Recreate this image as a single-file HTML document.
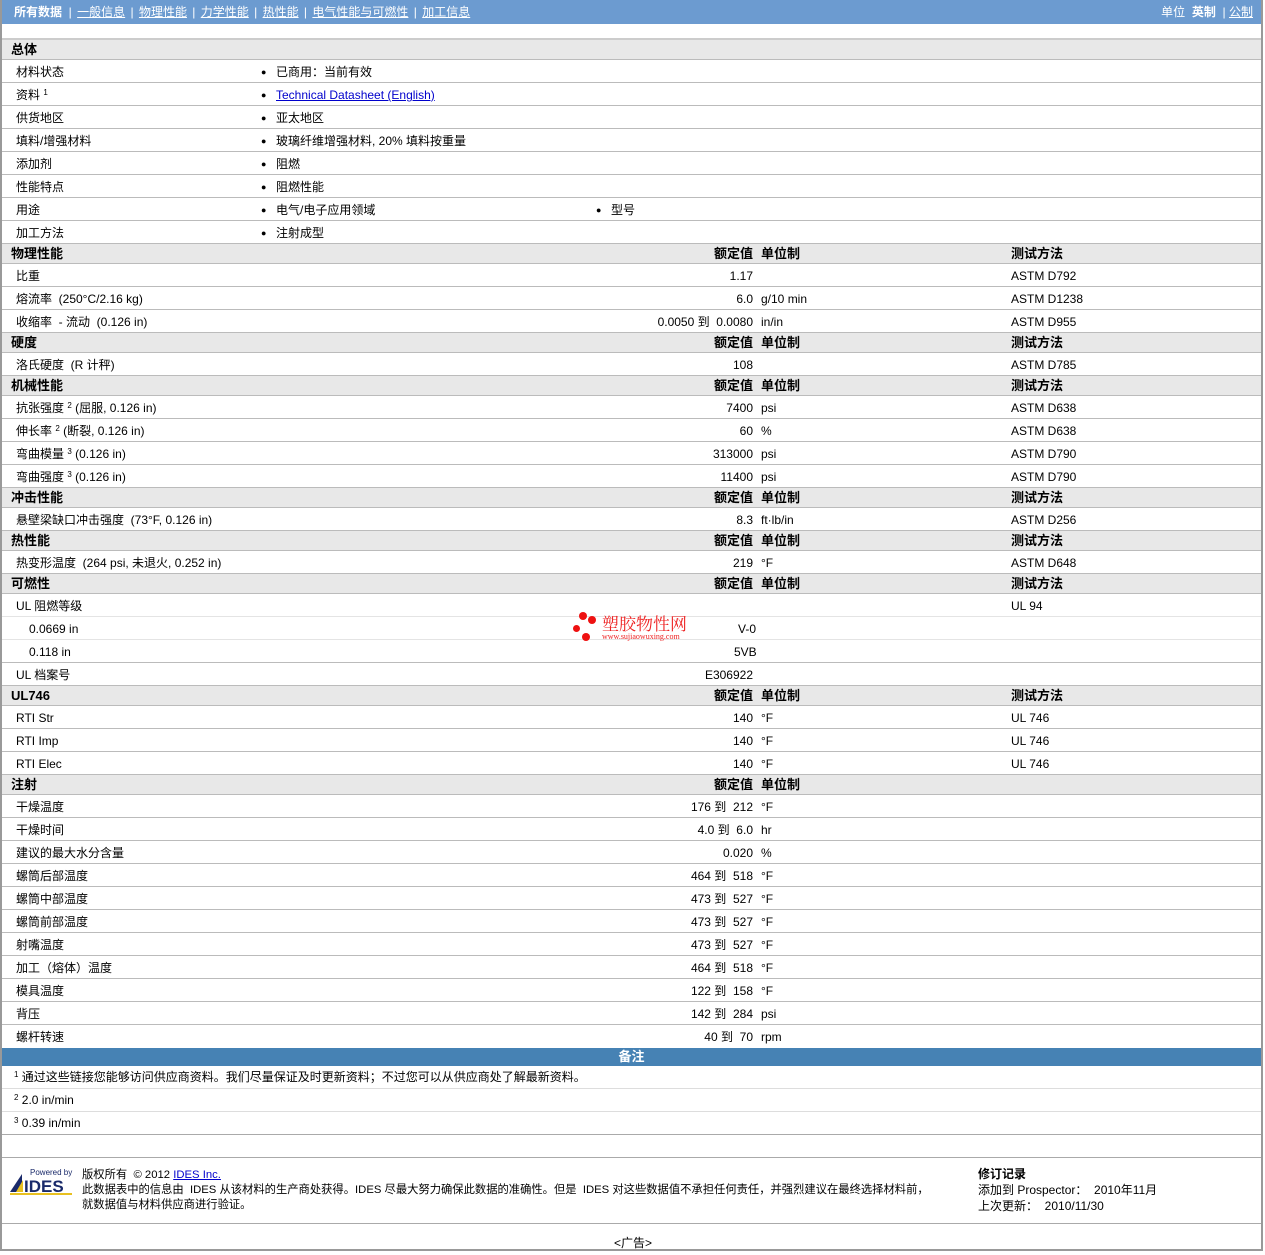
<!DOCTYPE html>
<html><head><meta charset="utf-8"><style>
*{margin:0;padding:0;box-sizing:border-box}
body{width:1265px;height:1255px;background:#fff;font-family:"Liberation Sans","Noto Sans CJK SC",sans-serif;font-size:12px;color:#000;position:relative;overflow:hidden}
#wrap{position:absolute;left:0;top:0;width:1263px;height:1251px;border-left:2px solid #999;border-right:2px solid #999;border-bottom:2px solid #999}
.top{height:24px;background:#6c9bd0;color:#fff;position:relative;font-size:12px;line-height:24px}
.top .l{position:absolute;left:12px;top:0;white-space:nowrap}
.top .l u{margin:0 2px}
.top .r{position:absolute;right:8px;top:0}
.gap{height:16px;border-bottom:2px solid #ccc}
.h{height:20px;background:#e8e8e8;border-bottom:1px solid #bbb;position:relative;font-weight:bold;font-size:13px;line-height:20px}
.r23{height:23px;border-bottom:1px solid #bbb;position:relative;line-height:24px}
.h span,.r23 span{position:absolute;top:0;white-space:nowrap}
.c1{left:14px}.hl{left:9px}
.b1{left:259px;font-size:9px}.t1{left:274px}.b2{left:594px;font-size:9px}.t2{left:609px}
.v{right:508px;text-align:right}
.u{left:759px}
.m{left:1009px}
sup{font-size:8px;line-height:0;vertical-align:4px}
a{color:#00c}
.note{height:18px;background:#4682b4;color:#fff;font-weight:bold;text-align:center;font-size:13px;line-height:17px}
.nr{height:23px;border-bottom:1px solid #ddd;padding-left:12px;line-height:23px}
</style></head><body><div id="wrap">
<div class="top"><div class="l"><b>所有数据</b> &nbsp;| <u>一般信息</u> | <u>物理性能</u> | <u>力学性能</u> | <u>热性能</u> | <u>电气性能与可燃性</u> | <u>加工信息</u></div><div class="r">单位 &nbsp;<b>英制</b> &nbsp;| <u>公制</u></div></div>
<div class="gap"></div>
<div class="h"><span class="hl">总体</span></div>
<div class="r23"><span class="c1">材料状态</span><span class="b1">●</span><span class="t1">已商用：当前有效</span></div>
<div class="r23"><span class="c1">资料 <sup>1</sup></span><span class="b1">●</span><span class="t1"><a><u>Technical Datasheet (English)</u></a></span></div>
<div class="r23"><span class="c1">供货地区</span><span class="b1">●</span><span class="t1">亚太地区</span></div>
<div class="r23"><span class="c1">填料/增强材料</span><span class="b1">●</span><span class="t1">玻璃纤维增强材料, 20% 填料按重量</span></div>
<div class="r23"><span class="c1">添加剂</span><span class="b1">●</span><span class="t1">阻燃</span></div>
<div class="r23"><span class="c1">性能特点</span><span class="b1">●</span><span class="t1">阻燃性能</span></div>
<div class="r23"><span class="c1">用途</span><span class="b1">●</span><span class="t1">电气/电子应用领域</span><span class="b2">●</span><span class="t2">型号</span></div>
<div class="r23"><span class="c1">加工方法</span><span class="b1">●</span><span class="t1">注射成型</span></div>

<div class="h"><span class="hl">物理性能</span><span class="v">额定值</span><span class="u">单位制</span><span class="m">测试方法</span></div>
<div class="r23"><span class="c1">比重</span><span class="v">1.17</span><span class="m">ASTM D792</span></div>
<div class="r23"><span class="c1">熔流率 &nbsp;(250°C/2.16 kg)</span><span class="v">6.0</span><span class="u">g/10 min</span><span class="m">ASTM D1238</span></div>
<div class="r23"><span class="c1">收缩率 &nbsp;- 流动 &nbsp;(0.126 in)</span><span class="v">0.0050 到 &nbsp;0.0080</span><span class="u">in/in</span><span class="m">ASTM D955</span></div>

<div class="h"><span class="hl">硬度</span><span class="v">额定值</span><span class="u">单位制</span><span class="m">测试方法</span></div>
<div class="r23"><span class="c1">洛氏硬度 &nbsp;(R 计秤)</span><span class="v">108</span><span class="m">ASTM D785</span></div>

<div class="h"><span class="hl">机械性能</span><span class="v">额定值</span><span class="u">单位制</span><span class="m">测试方法</span></div>
<div class="r23"><span class="c1">抗张强度 <sup>2</sup> (屈服, 0.126 in)</span><span class="v">7400</span><span class="u">psi</span><span class="m">ASTM D638</span></div>
<div class="r23"><span class="c1">伸长率 <sup>2</sup> (断裂, 0.126 in)</span><span class="v">60</span><span class="u">%</span><span class="m">ASTM D638</span></div>
<div class="r23"><span class="c1">弯曲模量 <sup>3</sup> (0.126 in)</span><span class="v">313000</span><span class="u">psi</span><span class="m">ASTM D790</span></div>
<div class="r23"><span class="c1">弯曲强度 <sup>3</sup> (0.126 in)</span><span class="v">11400</span><span class="u">psi</span><span class="m">ASTM D790</span></div>

<div class="h"><span class="hl">冲击性能</span><span class="v">额定值</span><span class="u">单位制</span><span class="m">测试方法</span></div>
<div class="r23"><span class="c1">悬壁梁缺口冲击强度 &nbsp;(73°F, 0.126 in)</span><span class="v">8.3</span><span class="u">ft·lb/in</span><span class="m">ASTM D256</span></div>

<div class="h"><span class="hl">热性能</span><span class="v">额定值</span><span class="u">单位制</span><span class="m">测试方法</span></div>
<div class="r23"><span class="c1">热变形温度 &nbsp;(264 psi, 未退火, 0.252 in)</span><span class="v">219</span><span class="u">°F</span><span class="m">ASTM D648</span></div>

<div class="h"><span class="hl">可燃性</span><span class="v">额定值</span><span class="u">单位制</span><span class="m">测试方法</span></div>
<div class="r23" style="border-bottom-color:#e4e4e4"><span class="c1">UL 阻燃等级</span><span class="m">UL 94</span></div>
<div class="r23" style="border-bottom-color:#e4e4e4"><span style="left:27px">0.0669 in</span><span style="left:736px">V-0</span></div>
<div class="r23"><span style="left:27px">0.118 in</span><span style="left:732px">5VB</span></div>
<div class="r23"><span class="c1">UL 档案号</span><span class="v">E306922</span></div>

<div class="h"><span class="hl">UL746</span><span class="v">额定值</span><span class="u">单位制</span><span class="m">测试方法</span></div>
<div class="r23"><span class="c1">RTI Str</span><span class="v">140</span><span class="u">°F</span><span class="m">UL 746</span></div>
<div class="r23"><span class="c1">RTI Imp</span><span class="v">140</span><span class="u">°F</span><span class="m">UL 746</span></div>
<div class="r23"><span class="c1">RTI Elec</span><span class="v">140</span><span class="u">°F</span><span class="m">UL 746</span></div>

<div class="h"><span class="hl">注射</span><span class="v">额定值</span><span class="u">单位制</span></div>
<div class="r23"><span class="c1">干燥温度</span><span class="v">176 到 &nbsp;212</span><span class="u">°F</span></div>
<div class="r23"><span class="c1">干燥时间</span><span class="v">4.0 到 &nbsp;6.0</span><span class="u">hr</span></div>
<div class="r23"><span class="c1">建议的最大水分含量</span><span class="v">0.020</span><span class="u">%</span></div>
<div class="r23"><span class="c1">螺筒后部温度</span><span class="v">464 到 &nbsp;518</span><span class="u">°F</span></div>
<div class="r23"><span class="c1">螺筒中部温度</span><span class="v">473 到 &nbsp;527</span><span class="u">°F</span></div>
<div class="r23"><span class="c1">螺筒前部温度</span><span class="v">473 到 &nbsp;527</span><span class="u">°F</span></div>
<div class="r23"><span class="c1">射嘴温度</span><span class="v">473 到 &nbsp;527</span><span class="u">°F</span></div>
<div class="r23"><span class="c1">加工（熔体）温度</span><span class="v">464 到 &nbsp;518</span><span class="u">°F</span></div>
<div class="r23"><span class="c1">模具温度</span><span class="v">122 到 &nbsp;158</span><span class="u">°F</span></div>
<div class="r23"><span class="c1">背压</span><span class="v">142 到 &nbsp;284</span><span class="u">psi</span></div>
<div class="r23" style="border-bottom:none"><span class="c1">螺杆转速</span><span class="v">40 到 &nbsp;70</span><span class="u">rpm</span></div>

<div class="note">备注</div>
<div class="nr"><sup>1</sup> 通过这些链接您能够访问供应商资料。我们尽量保证及时更新资料；不过您可以从供应商处了解最新资料。</div>
<div class="nr"><sup>2</sup> 2.0 in/min</div>
<div class="nr" style="border-bottom:1px solid #aaa"><sup>3</sup> 0.39 in/min</div>
<div style="height:23px;border-bottom:1px solid #aaa"></div>
<div style="height:66px;border-bottom:1px solid #aaa;position:relative">
 <svg style="position:absolute;left:6px;top:10px" width="66" height="28" viewBox="0 0 66 28"><text x="22" y="7" font-size="8" fill="#1a2a6a" font-family="Liberation Sans">Powered by</text><polygon points="2,24 14,6 14,24" fill="#1a2a6a"/><polygon points="8,24 15,12 15,24" fill="#e8c020"/><text x="16" y="24" font-size="17" font-weight="bold" fill="#1a2a6a" font-family="Liberation Sans">IDES</text><rect x="2" y="25" width="62" height="2" fill="#e8c020"/></svg>
 <div style="position:absolute;left:80px;top:10px;line-height:15px;font-size:11.3px;width:880px">版权所有 &nbsp;© 2012 <a><u>IDES Inc.</u></a><br>此数据表中的信息由 &nbsp;IDES 从该材料的生产商处获得。IDES 尽最大努力确保此数据的准确性。但是 &nbsp;IDES 对这些数据值不承担任何责任，并强烈建议在最终选择材料前，<br>就数据值与材料供应商进行验证。</div>
 <div style="position:absolute;left:976px;top:8px;line-height:16px"><b>修订记录</b><br>添加到 Prospector： &nbsp;2010年11月<br>上次更新： &nbsp;2010/11/30</div>
</div>
<div style="position:absolute;left:612px;top:1234px">&lt;广告&gt;</div>
<div style="position:absolute;left:570px;top:611px;width:140px;height:36px">
 <div style="position:absolute;left:7px;top:1px;width:8px;height:8px;border-radius:50%;background:#e11"></div>
 <div style="position:absolute;left:16px;top:5px;width:8px;height:8px;border-radius:50%;background:#e11"></div>
 <div style="position:absolute;left:1px;top:14px;width:7px;height:7px;border-radius:50%;background:#e11"></div>
 <div style="position:absolute;left:10px;top:22px;width:8px;height:8px;border-radius:50%;background:#e11"></div>
 <div style="position:absolute;left:30px;top:2px;color:#e22;font-size:17px;line-height:20px;font-family:'Noto Serif CJK SC',serif">塑胶物性网</div>
 <div style="position:absolute;left:30px;top:21px;color:#e22;font-size:8px;font-family:'Liberation Serif',serif">www.sujiaowuxing.com</div>
</div>
</div></body></html>
